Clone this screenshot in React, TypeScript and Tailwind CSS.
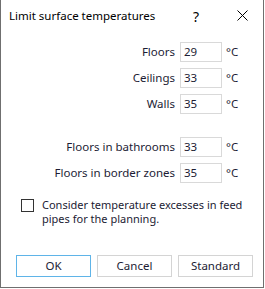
import React from "react";

const rows = [
  { label: "Floors", value: "29" },
  { label: "Ceilings", value: "33" },
  { label: "Walls", value: "35" },
];

const rows2 = [
  { label: "Floors in bathrooms", value: "33" },
  { label: "Floors in border zones", value: "35" },
];

const Row = ({ label, value }: { label: string; value: string }) => (
  <div className="flex items-center h-[20px]">
    <span className="w-[179px] pr-[5px] text-right">{label}</span>
    <div className="w-[42px] h-[20px] border border-[#d9d9d9] px-[3px] flex items-center">{value}</div>
    <span className="ml-[4px]">°C</span>
  </div>
);

const App = () => (
  <div className="w-[264px] h-[288px] bg-white border-x border-b border-[#6f6f6f] flex flex-col text-[11.5px] text-[#1c1c34] font-['Noto_Sans',sans-serif]">
    <div className="h-[31px] flex items-center pl-[8px] relative">
      <span className="text-[11.5px] text-black">Limit surface temperatures</span>
      <span className="absolute left-[192px] top-[6px] text-[14px] text-black">?</span>
      <svg className="absolute left-[236px] top-[10px]" width="11" height="11" viewBox="0 0 11 11">
        <path d="M0.5 0.5 L10.5 10.5 M10.5 0.5 L0.5 10.5" stroke="#000" strokeWidth="1" />
      </svg>
    </div>
    <div className="flex flex-col gap-[6px] mt-[11px]">
      {rows.map((r) => (
        <Row key={r.label} {...r} />
      ))}
    </div>
    <div className="flex flex-col gap-[6px] mt-[23px]">
      {rows2.map((r) => (
        <Row key={r.label} {...r} />
      ))}
    </div>
    <div className="flex items-start mt-[16px] pl-[20px]">
      <div className="w-[13px] h-[13px] border border-[#333] shrink-0" />
      <p className="ml-[8px] leading-[14px] -mt-[1px] text-[11px]">
        Consider temperature excesses in feed
        <br />
        pipes for the planning.
      </p>
    </div>
    <div className="flex gap-[6px] pl-[15px] mt-[29px]">
      <button className="w-[75px] h-[22px] border border-[#5fb4e8] bg-white">OK</button>
      <button className="w-[75px] h-[22px] border border-[#d4d4d4] bg-white">Cancel</button>
      <button className="w-[75px] h-[22px] border border-[#d4d4d4] bg-white">Standard</button>
    </div>
  </div>
);

export default App;
